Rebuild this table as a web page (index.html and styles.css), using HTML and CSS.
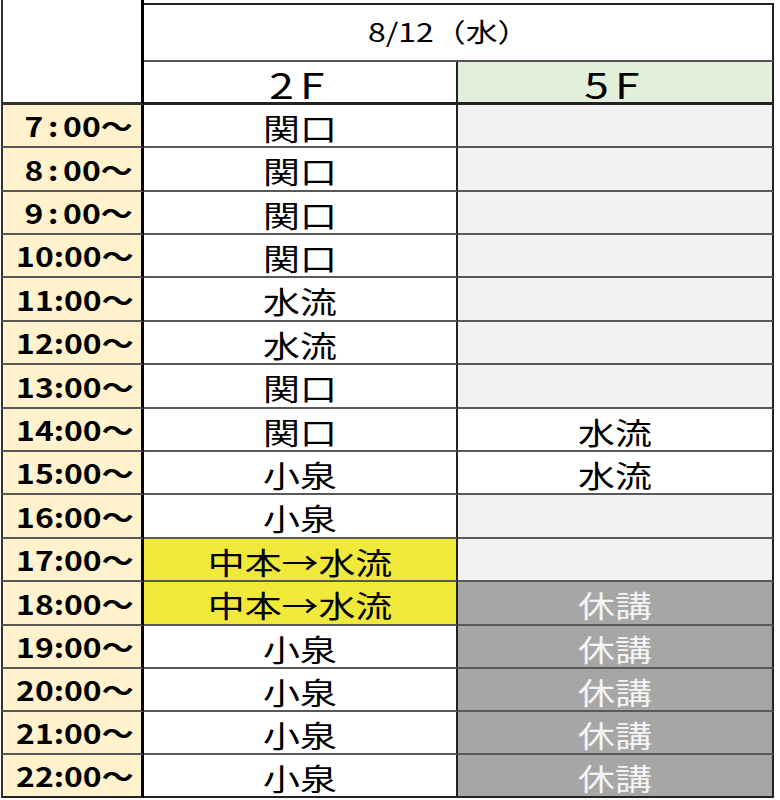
FILE: index.html
```html
<!DOCTYPE html>
<html lang="ja">
<head>
<meta charset="utf-8">
<title>8/12 schedule</title>
<link rel="stylesheet" href="styles.css">
</head>
<body>
<div class="sheet">
  <div class="corner"></div>
  <div class="date"><span class="sx">8/12（水）</span></div>
  <div class="floor"><span class="sx">2F</span></div>
  <div class="floor f5"><span class="sx">5F</span></div>

  <div class="time"><span class="tx">7<span class="wc">:</span>00～</span></div>
  <div class="c"><span class="sx">関口</span></div>
  <div class="c g"></div>

  <div class="time"><span class="tx">8<span class="wc">:</span>00～</span></div>
  <div class="c"><span class="sx">関口</span></div>
  <div class="c g"></div>

  <div class="time"><span class="tx">9<span class="wc">:</span>00～</span></div>
  <div class="c"><span class="sx">関口</span></div>
  <div class="c g"></div>

  <div class="time"><span class="tx">10:00～</span></div>
  <div class="c"><span class="sx">関口</span></div>
  <div class="c g"></div>

  <div class="time"><span class="tx">11:00～</span></div>
  <div class="c"><span class="sx">水流</span></div>
  <div class="c g"></div>

  <div class="time"><span class="tx">12:00～</span></div>
  <div class="c"><span class="sx">水流</span></div>
  <div class="c g"></div>

  <div class="time"><span class="tx">13:00～</span></div>
  <div class="c"><span class="sx">関口</span></div>
  <div class="c g"></div>

  <div class="time"><span class="tx">14:00～</span></div>
  <div class="c"><span class="sx">関口</span></div>
  <div class="c"><span class="sx">水流</span></div>

  <div class="time"><span class="tx">15:00～</span></div>
  <div class="c"><span class="sx">小泉</span></div>
  <div class="c"><span class="sx">水流</span></div>

  <div class="time"><span class="tx">16:00～</span></div>
  <div class="c"><span class="sx">小泉</span></div>
  <div class="c g"></div>

  <div class="time"><span class="tx">17:00～</span></div>
  <div class="c y"><span class="sx">中本→水流</span></div>
  <div class="c g"></div>

  <div class="time"><span class="tx">18:00～</span></div>
  <div class="c y"><span class="sx">中本→水流</span></div>
  <div class="c off"><span class="sx">休講</span></div>

  <div class="time"><span class="tx">19:00～</span></div>
  <div class="c"><span class="sx">小泉</span></div>
  <div class="c off"><span class="sx">休講</span></div>

  <div class="time"><span class="tx">20:00～</span></div>
  <div class="c"><span class="sx">小泉</span></div>
  <div class="c off"><span class="sx">休講</span></div>

  <div class="time"><span class="tx">21:00～</span></div>
  <div class="c"><span class="sx">小泉</span></div>
  <div class="c off"><span class="sx">休講</span></div>

  <div class="time last"><span class="tx">22:00～</span></div>
  <div class="c last"><span class="sx">小泉</span></div>
  <div class="c off last"><span class="sx">休講</span></div>
</div>
</body>
</html>
```

FILE: styles.css
```css
html, body {
  margin: 0;
  padding: 0;
  background: #ffffff;
}

body {
  font-family: "Noto Sans CJK JP", "Noto Sans", sans-serif;
  color: #000;
}

.sheet {
  margin-left: 1px;
  display: grid;
  grid-template-columns: 143px 314px 316px;
  grid-template-rows: 62px 43px 43px 44px 43px 43px 44px 43px 44px 43px 43px 44px 43px 44px 43px 43px 43px 43px;
}

.sheet > div {
  box-sizing: border-box;
  display: flex;
  align-items: center;
  justify-content: center;
}

.corner {
  grid-column: 1;
  grid-row: 1 / span 2;
  border-left: 2px solid #333;
  border-right: 3px solid #000;
  border-bottom: 3px solid #333;
  background: #fff;
}

.date {
  grid-column: 2 / span 2;
  grid-row: 1;
  margin-top: 3px;
  border-top: 2px solid #222;
  border-right: 2px solid #222;
  border-bottom: 2px solid #555;
  font-size: 26px;
  font-weight: 400;
  padding-right: 18px;
  padding-bottom: 4px;
}

.floor {
  border-right: 2px solid #222;
  border-bottom: 3px solid #222;
  font-size: 36px;
  font-weight: 400;
  letter-spacing: 5px;
  padding-top: 1px;
}

.f5 {
  background: #e2efda;
}

.time {
  grid-column: 1;
  justify-content: flex-end !important;
  background: #fff2cc;
  border-left: 2px solid #333;
  border-right: 3px solid #000;
  border-bottom: 2px solid #595959;
  padding-right: 8px;
  font-size: 27px;
  font-weight: 700;
}

.c {
  border-right: 2px solid #222;
  border-bottom: 2px solid #595959;
  background: #fff;
  font-size: 30px;
  font-weight: 400;
  padding-top: 2px;
}

.c.g {
  background: #f2f2f2;
}

.c.y {
  background: #f0e93a;
}

.c.off {
  background: #a6a6a6;
  color: #f4f4f4;
}

.last {
  border-bottom: 2px solid #222 !important;
}

.sx {
  display: inline-block;
  transform: scaleX(1.23);
  transform-origin: center;
  white-space: nowrap;
  line-height: 1;
}

.tx {
  display: inline-block;
  transform: scaleX(1.18);
  transform-origin: right center;
  white-space: nowrap;
  line-height: 1;
}

.wc {
  margin: 0 4px;
}
```
